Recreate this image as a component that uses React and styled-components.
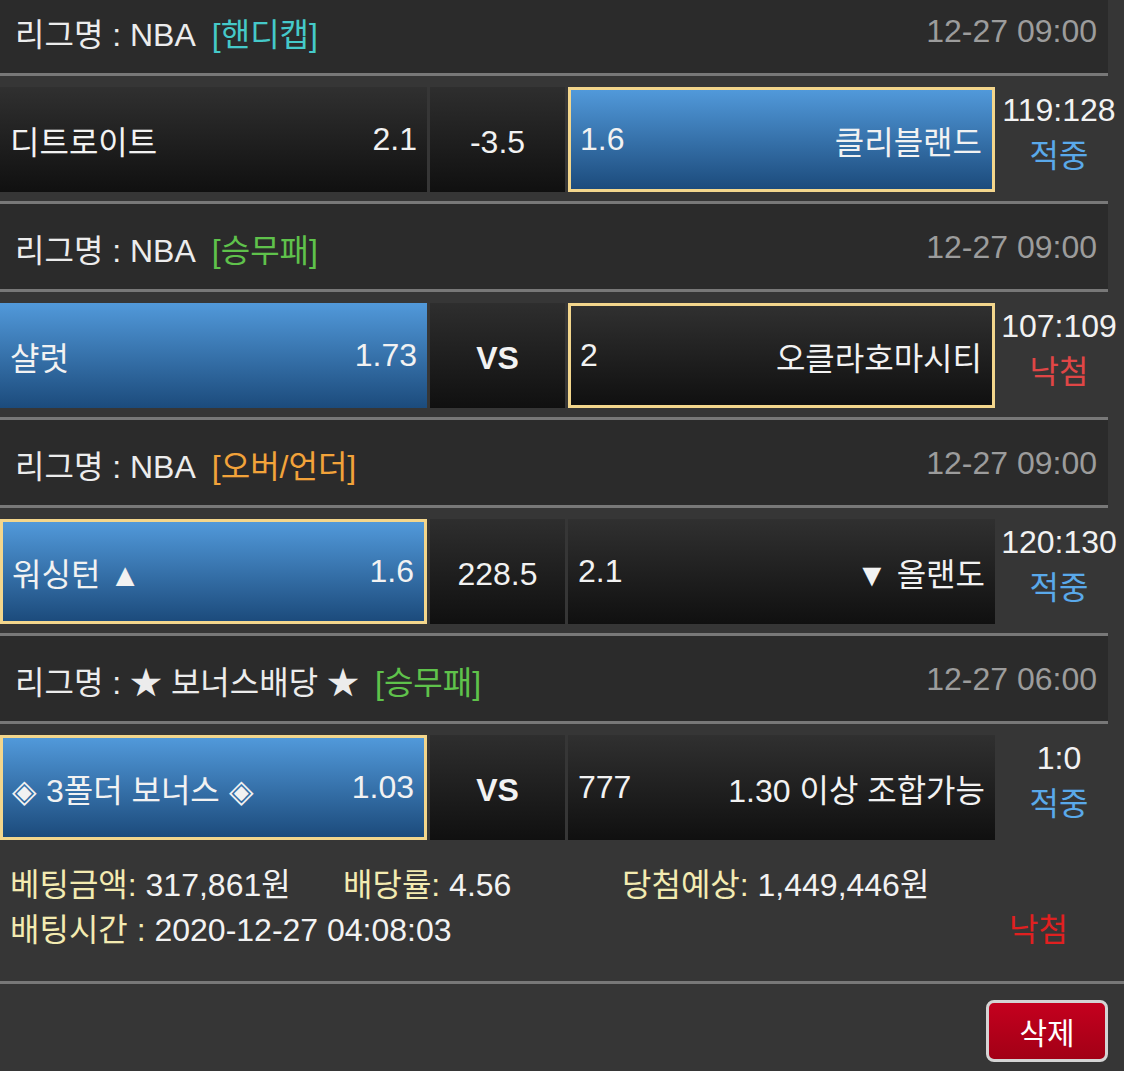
import React, { Fragment } from "react";
import styled, { createGlobalStyle, css } from "styled-components";

const GlobalStyle = createGlobalStyle`
  html, body {
    margin: 0;
    padding: 0;
    background: #363636;
  }
  body {
    font-family: "Liberation Sans", Arial, "Noto Sans CJK KR", sans-serif;
    color: #f2f2f2;
    overflow: hidden;
  }
`;

const Page = styled.div`
  width: 1124px;
  margin-top: -12px;
  font-size: 32px;
`;

const Divider = styled.div`
  height: 3px;
  background: #787878;
  width: ${(props) => (props.full ? "100%" : "1108px")};
`;

const LeagueHeader = styled.div`
  width: 1108px;
  height: 85px;
  box-sizing: border-box;
  padding: 2px 11px 0 15px;
  display: flex;
  align-items: center;
  justify-content: space-between;
  background: #2b2b2b;
  color: #ececec;
`;

const LeagueName = styled.div`
  display: flex;
  align-items: center;
  white-space: nowrap;
`;

const Tag = styled.span`
  margin-left: 16px;
  color: ${(props) => props.color};
`;

const MatchTime = styled.span`
  color: #9c9c9c;
`;

const MatchRow = styled.div`
  display: flex;
  gap: 3px;
  padding: 11px 0 ${(props) => (props.last ? "0" : "9px")};
`;

const TeamCell = styled.div`
  width: 427px;
  height: 105px;
  box-sizing: border-box;
  padding: 0 10px;
  display: flex;
  align-items: center;
  justify-content: space-between;
  white-space: nowrap;
  background: linear-gradient(#303030, #101010);
  ${(props) =>
    props.active &&
    css`
      background: linear-gradient(#5199da, #1c4b7c);
    `}
  ${(props) =>
    props.picked &&
    css`
      border: 3px solid #f3d68c;
      padding: 0 10px 0 9px;
    `}
`;

const MidCell = styled.div`
  width: 135px;
  height: 105px;
  display: flex;
  align-items: center;
  justify-content: center;
  padding-top: 6px;
  box-sizing: border-box;
  background: linear-gradient(#2e2e2e, #101010);
  font-weight: ${(props) => (props.bold ? 700 : 400)};
`;

const ScoreCol = styled.div`
  flex: 1;
  padding-right: 4px;
  display: flex;
  flex-direction: column;
  align-items: center;
  line-height: 46px;
  white-space: nowrap;
`;

const Result = styled.span`
  color: ${(props) => (props.win ? "#5aa9ea" : "#e04646")};
`;

const Summary = styled.div`
  padding: 23px 56px 28px 10px;
  line-height: 45px;
`;

const SummaryLine = styled.div`
  display: flex;
  align-items: center;
  justify-content: ${(props) => (props.spread ? "space-between" : "flex-start")};
  white-space: nowrap;
`;

const SummaryItem = styled.span`
  width: ${(props) => props.width || "auto"};
`;

const Label = styled.span`
  color: #f3ebb1;
`;

const LostMark = styled.span`
  color: #e02020;
`;

const Actions = styled.div`
  display: flex;
  justify-content: flex-end;
  padding: 16px 16px 0 0;
`;

const DeleteButton = styled.button`
  width: 122px;
  height: 62px;
  border: 3px solid #d4d4d4;
  border-radius: 8px;
  background: linear-gradient(#c4001e, #a20016);
  color: #fff;
  font-family: "Liberation Sans", "Noto Sans CJK KR", sans-serif;
  font-size: 30px;
  cursor: pointer;
`;

const matches = [
  {
    league: "NBA",
    type: "핸디캡",
    typeColor: "#45c9c9",
    time: "12-27 09:00",
    home: { name: "디트로이트", odds: "2.1" },
    mid: "-3.5",
    away: { name: "클리블랜드", odds: "1.6", active: true, picked: true },
    score: "119:128",
    win: true,
  },
  {
    league: "NBA",
    type: "승무패",
    typeColor: "#5fc24b",
    time: "12-27 09:00",
    home: { name: "샬럿", odds: "1.73", active: true },
    mid: "VS",
    midBold: true,
    away: { name: "오클라호마시티", odds: "2", picked: true },
    score: "107:109",
    win: false,
  },
  {
    league: "NBA",
    type: "오버/언더",
    typeColor: "#f2a33a",
    time: "12-27 09:00",
    home: { name: "워싱턴 ▲", odds: "1.6", active: true, picked: true },
    mid: "228.5",
    away: { name: "▼ 올랜도", odds: "2.1" },
    score: "120:130",
    win: true,
  },
  {
    league: "★ 보너스배당 ★",
    type: "승무패",
    typeColor: "#5fc24b",
    time: "12-27 06:00",
    home: { name: "◈ 3폴더 보너스 ◈", odds: "1.03", active: true, picked: true },
    mid: "VS",
    midBold: true,
    away: { name: "1.30 이상 조합가능", odds: "777" },
    score: "1:0",
    win: true,
  },
];

export default function App() {
  return (
    <Page>
      <GlobalStyle />
      {matches.map((m, i) => {
        const last = i === matches.length - 1;
        return (
          <Fragment key={i}>
            {i > 0 && <Divider />}
            <LeagueHeader>
              <LeagueName>
                리그명 : {m.league}
                <Tag color={m.typeColor}>[{m.type}]</Tag>
              </LeagueName>
              <MatchTime>{m.time}</MatchTime>
            </LeagueHeader>
            <Divider />
            <MatchRow last={last}>
              <TeamCell active={m.home.active} picked={m.home.picked}>
                <span>{m.home.name}</span>
                <span>{m.home.odds}</span>
              </TeamCell>
              <MidCell bold={m.midBold}>{m.mid}</MidCell>
              <TeamCell active={m.away.active} picked={m.away.picked}>
                <span>{m.away.odds}</span>
                <span>{m.away.name}</span>
              </TeamCell>
              <ScoreCol>
                <span>{m.score}</span>
                <Result win={m.win}>{m.win ? "적중" : "낙첨"}</Result>
              </ScoreCol>
            </MatchRow>
          </Fragment>
        );
      })}
      <Summary>
        <SummaryLine>
          <SummaryItem width="333px">
            <Label>베팅금액:</Label> 317,861원
          </SummaryItem>
          <SummaryItem width="279px">
            <Label>배당률:</Label> 4.56
          </SummaryItem>
          <SummaryItem>
            <Label>당첨예상:</Label> 1,449,446원
          </SummaryItem>
        </SummaryLine>
        <SummaryLine spread>
          <span>
            <Label>배팅시간 :</Label> 2020-12-27 04:08:03
          </span>
          <LostMark>낙첨</LostMark>
        </SummaryLine>
      </Summary>
      <Divider full />
      <Actions>
        <DeleteButton>삭제</DeleteButton>
      </Actions>
    </Page>
  );
}
